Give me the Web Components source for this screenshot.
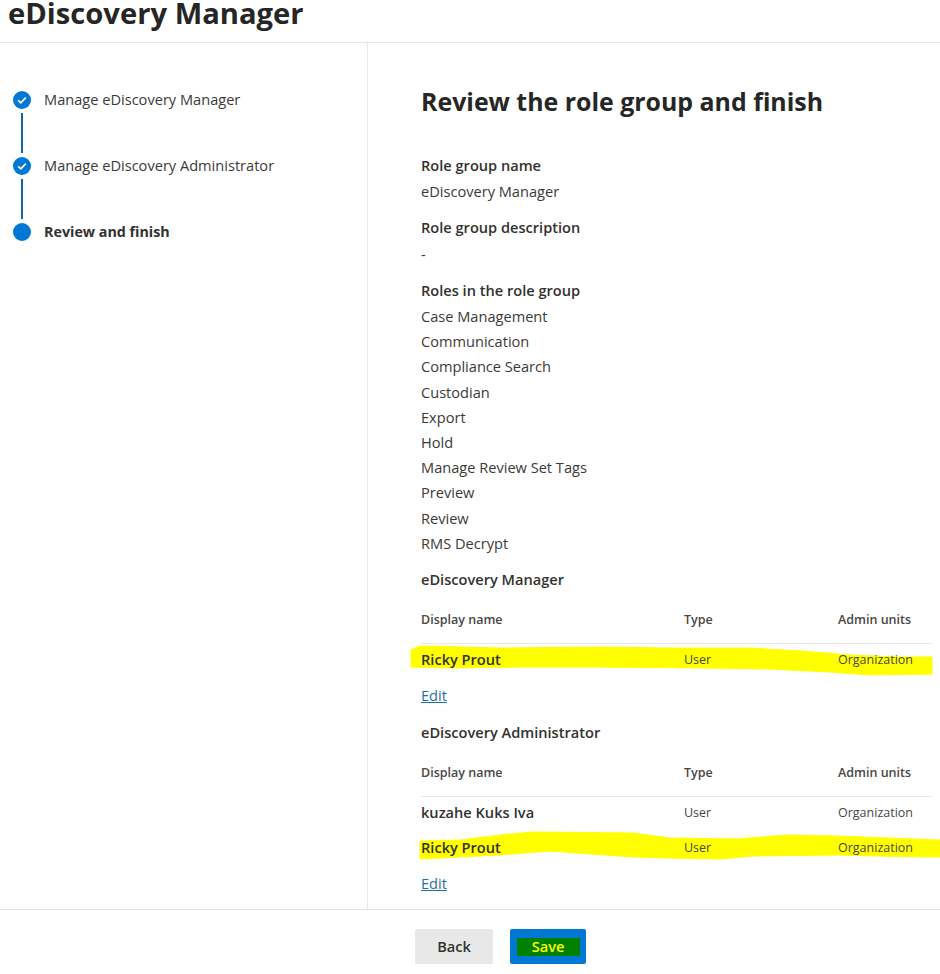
<!DOCTYPE html>
<html>
<head>
<meta charset="utf-8">
<style>
  html, body { margin: 0; height: 100%; background: #fff; overflow: hidden; }
  body { font-family: "Open Sans", "Noto Sans", sans-serif; color: #323130; }
</style>
</head>
<body>
<wizard-page>
  <span slot="title">eDiscovery Manager</span>
  <wizard-step slot="steps" state="done">Manage eDiscovery Manager</wizard-step>
  <wizard-step slot="steps" state="done">Manage eDiscovery Administrator</wizard-step>
  <wizard-step slot="steps" state="current" last>Review and finish</wizard-step>

  <review-heading>Review the role group and finish</review-heading>
  <review-field label="Role group name">eDiscovery Manager</review-field>
  <review-field label="Role group description">-</review-field>
  <review-field label="Roles in the role group" list="Case Management|Communication|Compliance Search|Custodian|Export|Hold|Manage Review Set Tags|Preview|Review|RMS Decrypt"></review-field>

  <member-table label="eDiscovery Manager">
    <member-row name="Ricky Prout" mark="a"></member-row>
  </member-table>
  <member-table label="eDiscovery Administrator">
    <member-row name="kuzahe Kuks Iva"></member-row>
    <member-row name="Ricky Prout" mark="b"></member-row>
  </member-table>

  <wizard-button slot="footer">Back</wizard-button>
  <wizard-button slot="footer" primary>Save</wizard-button>
</wizard-page>

<script>
class WizardPage extends HTMLElement {
  constructor() {
    super();
    this.attachShadow({ mode: 'open' });
    this.shadowRoot.innerHTML = `
      <style>
        :host {
          display: grid;
          grid-template-rows: 43px 866px 65px;
          height: 974px;
          width: 940px;
        }
        header {
          border-bottom: 1px solid #e8e8e8;
          padding-left: 8px;
        }
        h1 {
          margin: 0;
          font-size: 29.2px;
          line-height: 26px;
          font-weight: 700;
          color: #262626;
          white-space: nowrap;
        }
        #body {
          display: grid;
          grid-template-columns: 368px 1fr;
          min-height: 0;
        }
        nav {
          border-right: 1px solid #e8e8e8;
          padding: 47px 0 0 13px;
        }
        main {
          padding: 0 8px 0 53px;
          min-height: 0;
        }
        footer {
          border-top: 1px solid #e3e3e3;
          display: flex;
          gap: 17px;
          padding: 19px 0 0 415px;
          align-items: flex-start;
        }
      </style>
      <header><h1><slot name="title"></slot></h1></header>
      <div id="body">
        <nav><slot name="steps"></slot></nav>
        <main><slot></slot></main>
      </div>
      <footer><slot name="footer"></slot></footer>
    `;
  }
}

class WizardStep extends HTMLElement {
  constructor() {
    super();
    this.attachShadow({ mode: 'open' });
    const done = this.getAttribute('state') === 'done';
    const last = this.hasAttribute('last');
    this.shadowRoot.innerHTML = `
      <style>
        :host {
          display: grid;
          grid-template-columns: 18px 1fr;
          column-gap: 13px;
          height: 66px;
          font-size: 14.6px;
          line-height: 20px;
          color: #3b3a39;
        }
        :host([state="current"]) { font-weight: 700; color: #323130; font-size: 14.3px; }
        .rail { display: flex; flex-direction: column; align-items: center; }
        svg { width: 18px; height: 18px; flex: none; margin-top: 1px; }
        .line { width: 2px; height: 40px; margin-top: 4px; background: #1367a6; }
        .text { white-space: nowrap; margin-top: -1px; }
        :host([state="current"]) .text { margin-top: 0; }
      </style>
      <div class="rail">
        <svg viewBox="0 0 18 18">
          <circle cx="9" cy="9" r="9" fill="#0078d4"/>
          ${done ? '<path d="M5.2 9.3l2.6 2.5 5-5.2" fill="none" stroke="#fff" stroke-width="1.6"/>' : ''}
        </svg>
        ${last ? '' : '<div class="line"></div>'}
      </div>
      <div class="text"><slot></slot></div>
    `;
  }
}

class ReviewHeading extends HTMLElement {
  constructor() {
    super();
    this.attachShadow({ mode: 'open' });
    this.shadowRoot.innerHTML = `
      <style>
        :host {
          display: block;
          padding-top: 40px;
          margin-bottom: 34px;
          font-size: 24.9px;
          line-height: 36px;
          font-weight: 700;
          color: #262626;
          white-space: nowrap;
        }
      </style>
      <slot></slot>
    `;
  }
}

class ReviewField extends HTMLElement {
  constructor() {
    super();
    this.attachShadow({ mode: 'open' });
    const list = this.getAttribute('list');
    const items = list ? list.split('|').map(t => `<div class="item">${t}</div>`).join('') : '';
    this.shadowRoot.innerHTML = `
      <style>
        :host {
          display: block;
          font-size: 14.6px;
          line-height: 25.2px;
          margin-bottom: 11px;
          color: #3b3a39;
        }
        .label { font-weight: 600; color: #323130; margin-bottom: 1px; }
      </style>
      <div class="label">${this.getAttribute('label')}</div>
      ${items}
      <slot></slot>
    `;
  }
}

class MemberTable extends HTMLElement {
  constructor() {
    super();
    this.attachShadow({ mode: 'open' });
    this.shadowRoot.innerHTML = `
      <style>
        :host {
          display: block;
          font-size: 14.6px;
          margin-top: 1px;
          margin-bottom: 13px;
        }
        .label { font-weight: 600; line-height: 24px; color: #323130; }
        .head {
          display: grid;
          grid-template-columns: 263px 154px 94px;
          height: 53px;
          box-sizing: border-box;
          padding-top: 19px;
          border-bottom: 1px solid #e8e8e8;
          font-size: 12.5px;
          line-height: 20px;
          font-weight: 600;
          color: #484644;
          white-space: nowrap;
        }
        a {
          display: inline-block;
          margin-top: 4px;
          line-height: 24px;
          color: #1f6fa8;
          text-decoration: underline;
        }
      </style>
      <div class="label">${this.getAttribute('label')}</div>
      <div class="head"><div>Display name</div><div>Type</div><div>Admin units</div></div>
      <slot></slot>
      <a href="#">Edit</a>
    `;
  }
}

// marker strokes traced off the reference, in px relative to the row box
const MARKS = {
  a: 'M-10 6 L-1 2 L79 4 L179 3 L249 4 L329 4 L379 7 L429 11 L479 13 L511 13 L511 30 L449 31 L409 28 L349 25 L279 24 L179 23 L99 23 L29 24 L-10 23 Z',
  b: 'M-1 9 L39 8 L79 3 L112 0 L212 1 L249 6 L316 7 L366 3 L416 4 L519 8 L519 25 L499 25 L416 23 L332 24 L299 27 L249 26 L212 25 L129 19 L79 23 L-1 27 Z'
};

class MemberRow extends HTMLElement {
  constructor() {
    super();
    this.attachShadow({ mode: 'open' });
    const mark = MARKS[this.getAttribute('mark')];
    this.shadowRoot.innerHTML = `
      <style>
        :host {
          display: grid;
          grid-template-columns: 263px 154px 94px;
          align-items: center;
          position: relative;
          height: 35px;
          box-sizing: border-box;
          padding-bottom: 4px;
          font-size: 12.5px;
          color: #484644;
          white-space: nowrap;
        }
        .name { font-size: 14.6px; font-weight: 600; color: #323130; margin-bottom: 2px; }
        div { position: relative; }
        svg {
          position: absolute;
          left: 0;
          top: 0;
          width: 511px;
          height: 35px;
          overflow: visible;
        }
      </style>
      ${mark ? `<svg viewBox="0 0 511 35"><path d="${mark}" fill="#ffff00" stroke="#ffff00" stroke-linejoin="round"/></svg>` : ''}
      <div class="name">${this.getAttribute('name')}</div>
      <div>User</div>
      <div>Organization</div>
    `;
  }
}

class WizardButton extends HTMLElement {
  constructor() {
    super();
    this.attachShadow({ mode: 'open' });
    this.shadowRoot.innerHTML = `
      <style>
        :host {
          display: flex;
          align-items: center;
          justify-content: center;
          box-sizing: border-box;
          width: 78px;
          height: 35px;
          padding-bottom: 2px;
          background: #e8e8e8;
          border-radius: 2px;
          font-size: 14.6px;
          font-weight: 600;
          color: #323130;
        }
        :host([primary]) { background: #0078d4; width: 76px; padding-bottom: 0; }
        :host([primary]) span {
          display: block;
          width: 63px;
          height: 18px;
          line-height: 16px;
          text-align: center;
          background: #008000;
          color: #ffff00;
        }
      </style>
      <span><slot></slot></span>
    `;
  }
}

customElements.define('wizard-page', WizardPage);
customElements.define('wizard-step', WizardStep);
customElements.define('review-heading', ReviewHeading);
customElements.define('review-field', ReviewField);
customElements.define('member-table', MemberTable);
customElements.define('member-row', MemberRow);
customElements.define('wizard-button', WizardButton);
</script>
</body>
</html>
